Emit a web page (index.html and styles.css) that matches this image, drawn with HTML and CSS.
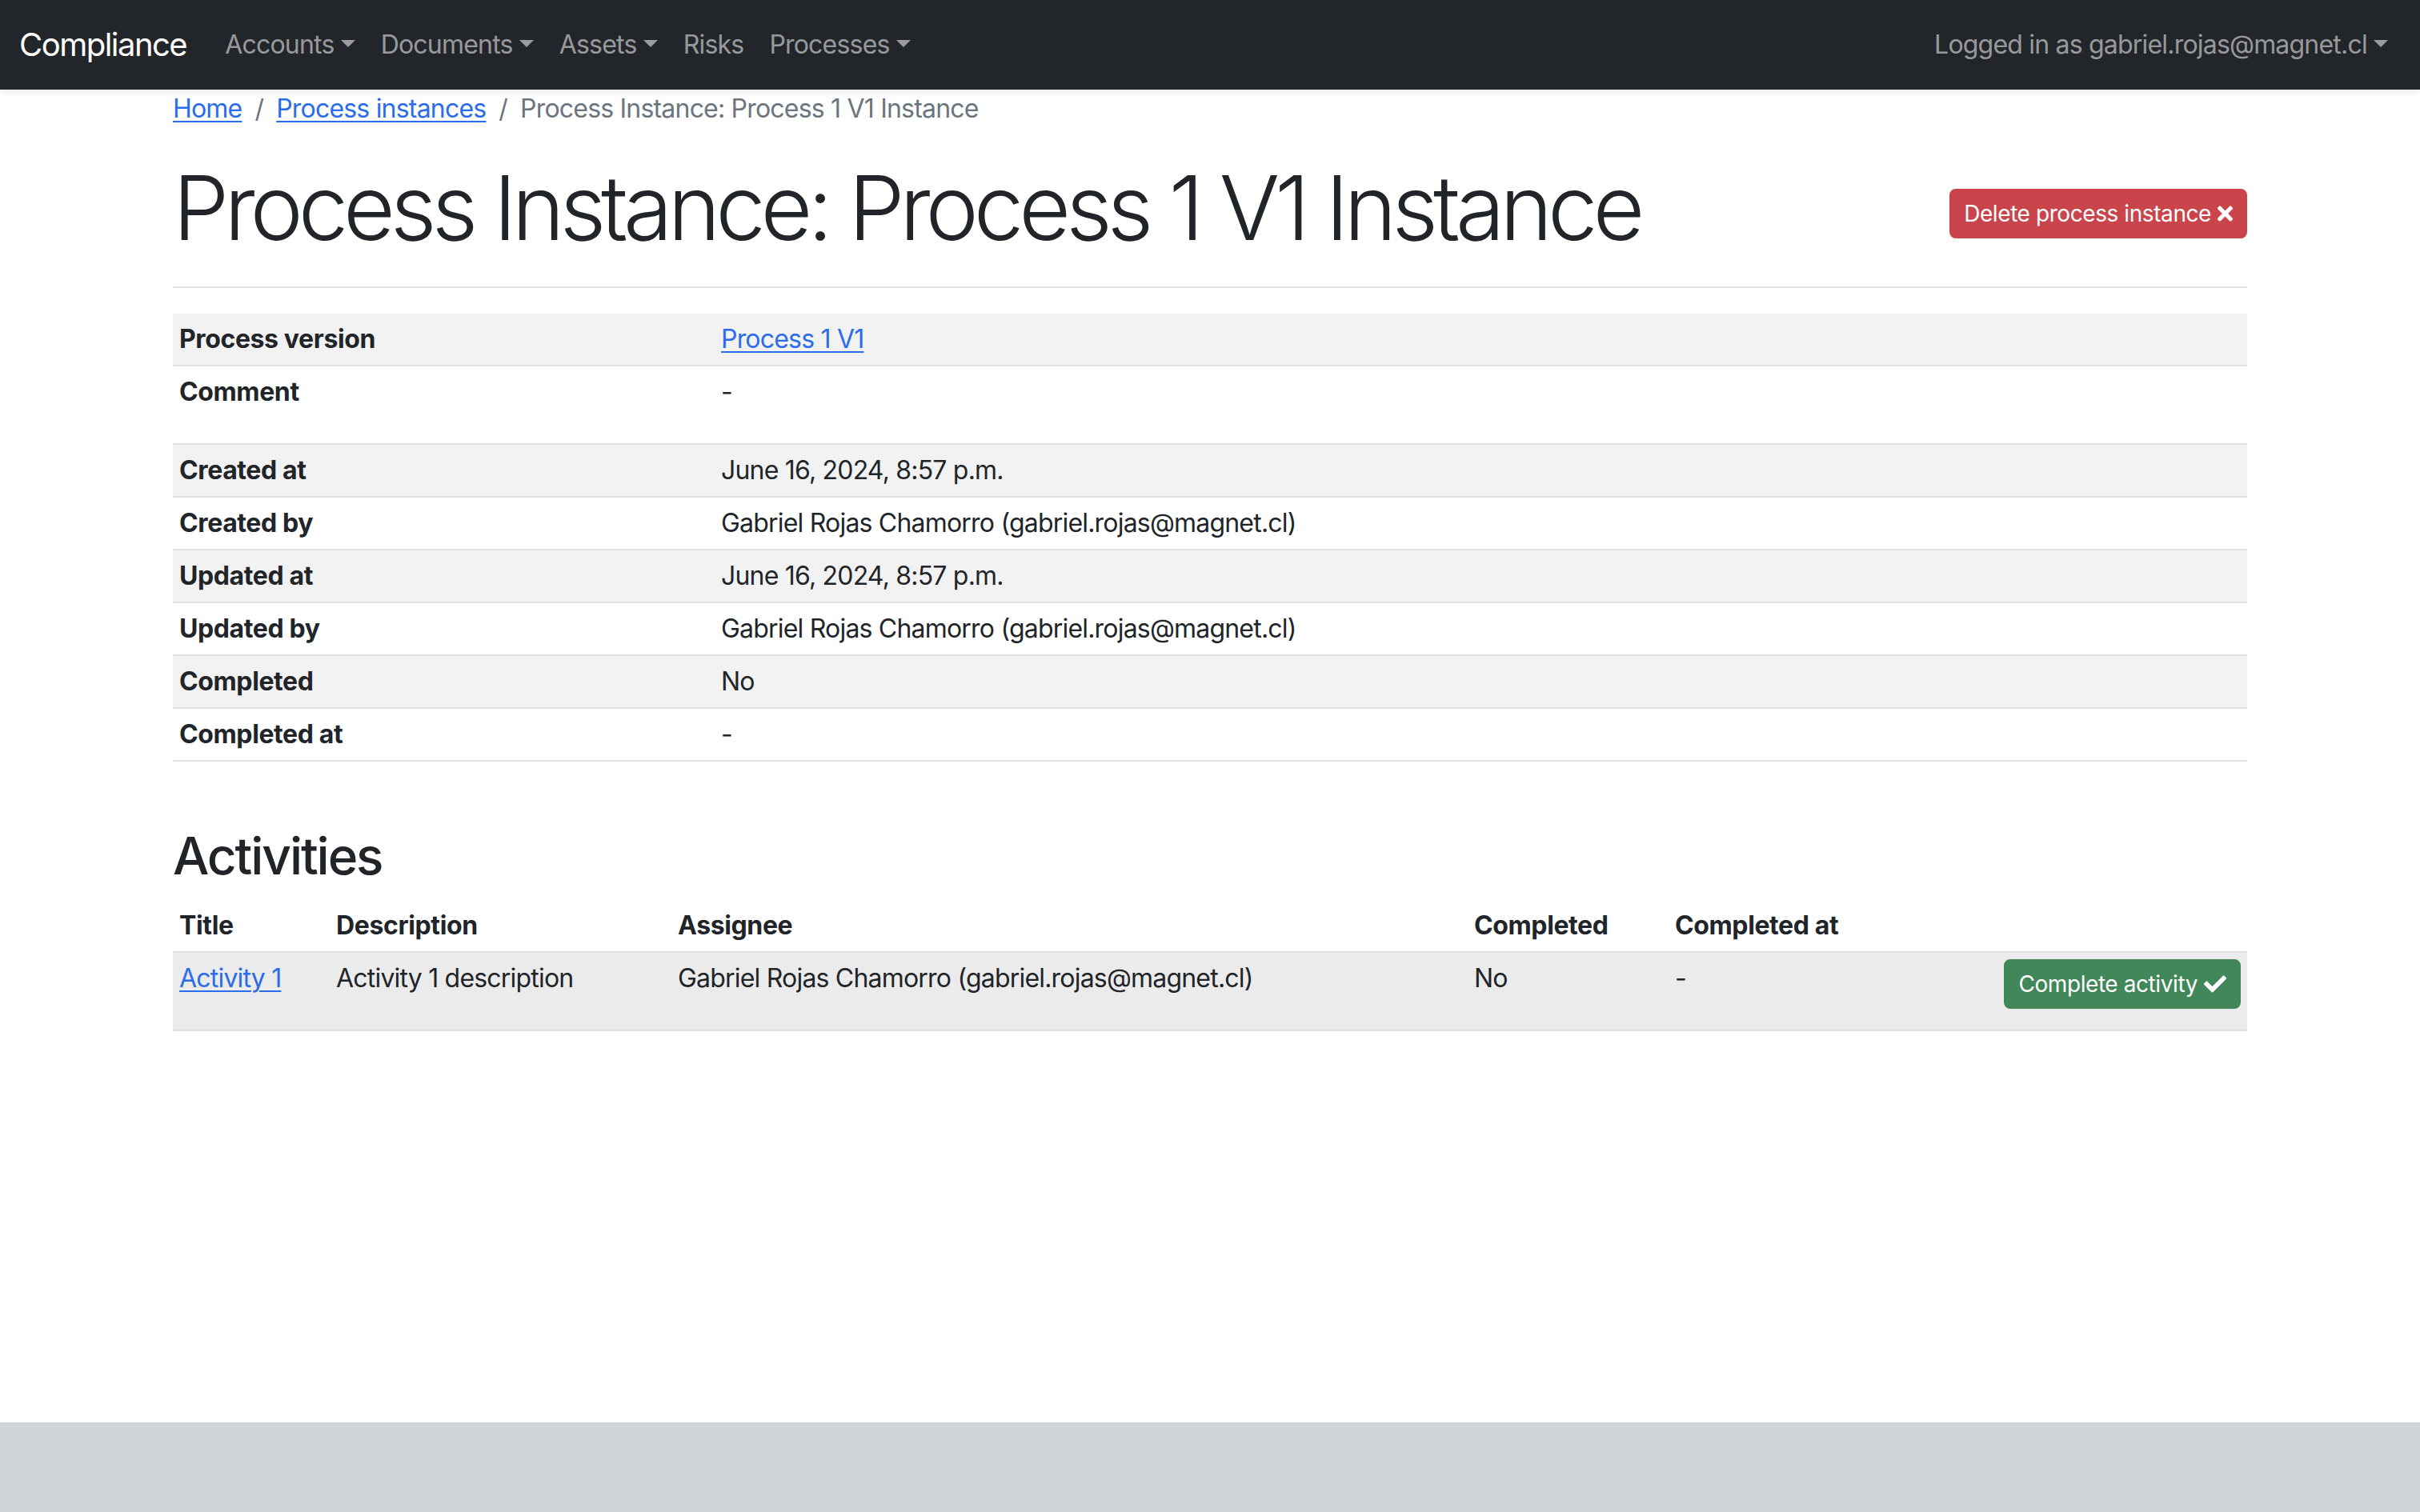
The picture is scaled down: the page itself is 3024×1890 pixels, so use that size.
FILE: index.html
```html
<!DOCTYPE html>
<html lang="en">
<head>
<meta charset="utf-8">
<title>Process Instance: Process 1 V1 Instance</title>
<link rel="stylesheet" href="styles.css">
</head>
<body>
<nav class="navbar">
  <div class="navbar-inner">
    <a class="brand" href="#">Compliance</a>
    <ul class="nav-list">
      <li><a class="nav-link dropdown-toggle" href="#">Accounts</a></li>
      <li><a class="nav-link dropdown-toggle" href="#">Documents</a></li>
      <li><a class="nav-link dropdown-toggle" href="#">Assets</a></li>
      <li><a class="nav-link" href="#">Risks</a></li>
      <li><a class="nav-link dropdown-toggle" href="#">Processes</a></li>
    </ul>
    <ul class="nav-list nav-right">
      <li><a class="nav-link dropdown-toggle" href="#">Logged in as gabriel.rojas@magnet.cl</a></li>
    </ul>
  </div>
</nav>

<main class="container">
  <ol class="breadcrumb">
    <li class="crumb"><a href="#">Home</a></li>
    <li class="crumb"><a href="#">Process instances</a></li>
    <li class="crumb active">Process Instance: Process 1 V1 Instance</li>
  </ol>

  <div class="page-header">
    <h1 class="page-title">Process Instance: Process 1 V1 Instance</h1>
    <a class="btn btn-danger" href="#">Delete process instance<svg class="icon icon-x" viewBox="0 0 352 512" aria-hidden="true"><path d="M242.72 256l100.07-100.07c12.28-12.28 12.28-32.19 0-44.48l-22.24-22.24c-12.28-12.28-32.19-12.28-44.48 0L176 189.28 75.93 89.21c-12.28-12.28-32.19-12.28-44.48 0L9.21 111.45c-12.28 12.280-12.28 32.19 0 44.48L109.28 256 9.21 356.07c-12.28 12.28-12.28 32.19 0 44.48l22.24 22.24c12.28 12.28 32.2 12.28 44.48 0L176 322.72l100.07 100.07c12.28 12.28 32.2 12.28 44.48 0l22.24-22.24c12.28-12.28 12.28-32.19 0-44.48L242.72 256z"/></svg></a>
  </div>
  <hr class="divider">

  <table class="table detail-table">
    <colgroup><col class="col-label"><col></colgroup>
    <tbody>
      <tr class="striped"><th>Process version</th><td><a href="#">Process 1 V1</a></td></tr>
      <tr><th>Comment</th><td><p class="comment">-</p></td></tr>
      <tr class="striped"><th>Created at</th><td>June 16, 2024, 8:57 p.m.</td></tr>
      <tr><th>Created by</th><td>Gabriel Rojas Chamorro (gabriel.rojas@magnet.cl)</td></tr>
      <tr class="striped"><th>Updated at</th><td>June 16, 2024, 8:57 p.m.</td></tr>
      <tr><th>Updated by</th><td>Gabriel Rojas Chamorro (gabriel.rojas@magnet.cl)</td></tr>
      <tr class="striped"><th>Completed</th><td>No</td></tr>
      <tr><th>Completed at</th><td>-</td></tr>
    </tbody>
  </table>

  <h2 class="section-title">Activities</h2>
  <table class="table activity-table">
    <colgroup>
      <col class="c-title"><col class="c-desc"><col class="c-assignee"><col class="c-completed"><col class="c-completed-at"><col class="c-action">
    </colgroup>
    <thead>
      <tr><th>Title</th><th>Description</th><th>Assignee</th><th>Completed</th><th>Completed at</th><th></th></tr>
    </thead>
    <tbody>
      <tr class="hovered">
        <td><a href="#">Activity 1</a></td>
        <td>Activity 1 description</td>
        <td>Gabriel Rojas Chamorro (gabriel.rojas@magnet.cl)</td>
        <td>No</td>
        <td>-</td>
        <td class="text-end">
          <form class="row-form">
            <button type="button" class="btn btn-success">Complete activity<svg class="icon icon-check" viewBox="0 0 512 512" aria-hidden="true"><path d="M173.898 439.404l-166.4-166.4c-9.997-9.997-9.997-26.206 0-36.204l36.203-36.204c9.997-9.998 26.207-9.998 36.204 0L192 312.69 432.095 72.596c9.997-9.997 26.207-9.997 36.204 0l36.203 36.204c9.997 9.997 9.997 26.206 0 36.204l-294.4 294.401c-9.998 9.997-26.207 9.997-36.204-.001z"/></svg></button>
          </form>
        </td>
      </tr>
    </tbody>
  </table>
</main>

<footer class="footer"></footer>
</body>
</html>
```

FILE: styles.css
```css
*, *::before, *::after { box-sizing: border-box; }

html, body { height: 100%; }

body {
  margin: 0;
  min-height: 100vh;
  display: flex;
  flex-direction: column;
  font-family: Inter, "Noto Sans", "Liberation Sans", sans-serif;
  font-size: 32px;
  line-height: 1.5;
  letter-spacing: -0.025em;
  color: #212529;
  background: #ffffff;
}

a { color: #2a6cec; text-decoration: underline; text-underline-offset: 4px; text-decoration-thickness: 2px; }

/* navbar */
.navbar {
  background: #222529;
  padding: 16px 0;
  box-shadow: 0 4px 8px rgba(0, 0, 0, 0.08);
  position: relative;
  z-index: 2;
}
.navbar-inner {
  display: flex;
  align-items: center;
  padding: 0 24px;
}
.brand {
  color: #ffffff;
  text-decoration: none;
  font-size: 40px;
  line-height: 1.5;
  letter-spacing: -0.038em;
  padding: 10px 0;
  margin-right: 32px;
}
.nav-list {
  list-style: none;
  margin: 0;
  padding: 0;
  display: flex;
}
.nav-right { margin-left: auto; }
.nav-link {
  display: block;
  padding: 16px;
  color: rgba(255, 255, 255, 0.55);
  text-decoration: none;
}
.dropdown-toggle::after {
  content: "";
  display: inline-block;
  margin-left: 0.255em;
  vertical-align: 0.255em;
  border-top: 0.3em solid;
  border-right: 0.3em solid transparent;
  border-left: 0.3em solid transparent;
  border-bottom: 0;
}

/* container */
.container {
  width: 100%;
  max-width: 2640px;
  margin: 0 auto;
  padding: 0 24px;
}

.breadcrumb {
  display: flex;
  list-style: none;
  margin: 0 0 32px;
  padding: 0;
}
.crumb + .crumb { padding-left: 16px; }
.crumb + .crumb::before {
  content: "/";
  float: left;
  padding-right: 16px;
  color: #6c757d;
}
.crumb.active { color: #6c757d; }

.page-header {
  display: flex;
  justify-content: space-between;
  align-items: center;
}
.page-title {
  margin: 0 0 16px;
  font-size: 112px;
  font-weight: 300;
  line-height: 1.2;
  letter-spacing: -0.055em;
}

.btn {
  display: inline-flex;
  align-items: center;
  gap: 8px;
  white-space: nowrap;
  font-family: inherit;
  font-size: 28px;
  line-height: 1.5;
  letter-spacing: -0.015em;
  padding: 8px 16px;
  border: 2px solid transparent;
  border-radius: 8px;
  color: #ffffff;
  text-decoration: none;
  cursor: pointer;
  vertical-align: top;
}
.btn-danger { background: #ca444b; border-color: #ca444b; }
.btn-success { background: #42875a; border-color: #42875a; }
.icon { fill: currentColor; flex: none; }
.icon-x { width: 19px; height: 28px; }
.icon-check { width: 28px; height: 28px; }

.divider {
  margin: 16px 0 32px;
  border: 0;
  border-top: 2px solid #dfe2e5;
  opacity: 1;
}

/* tables */
.table {
  width: 100%;
  border-collapse: collapse;
  table-layout: fixed;
}
.table th, .table td {
  padding: 8px;
  text-align: left;
  vertical-align: top;
  border-bottom: 2px solid #dee2e6;
}
.table th { font-weight: 700; letter-spacing: -0.012em; }
.striped > th, .striped > td { background: #f2f2f2; }
.hovered > td { background: #ebebeb; }

.detail-table { margin-bottom: 0; }
.col-label { width: 677px; }
.comment { margin: 0 0 32px; }

.section-title {
  margin: 80px 0 16px;
  font-size: 64px;
  font-weight: 500;
  line-height: 1.2;
  letter-spacing: -0.033em;
}

.c-title { width: 196px; }
.c-desc { width: 427px; }
.c-assignee { width: 995px; }
.c-completed { width: 251px; }
.c-completed-at { width: 410px; }
.c-action { width: 313px; }
.text-end { text-align: right !important; }
.row-form { margin: 0 0 18px; }

.footer {
  margin-top: auto;
  height: 112px;
  background: #cfd4d8;
}
```
